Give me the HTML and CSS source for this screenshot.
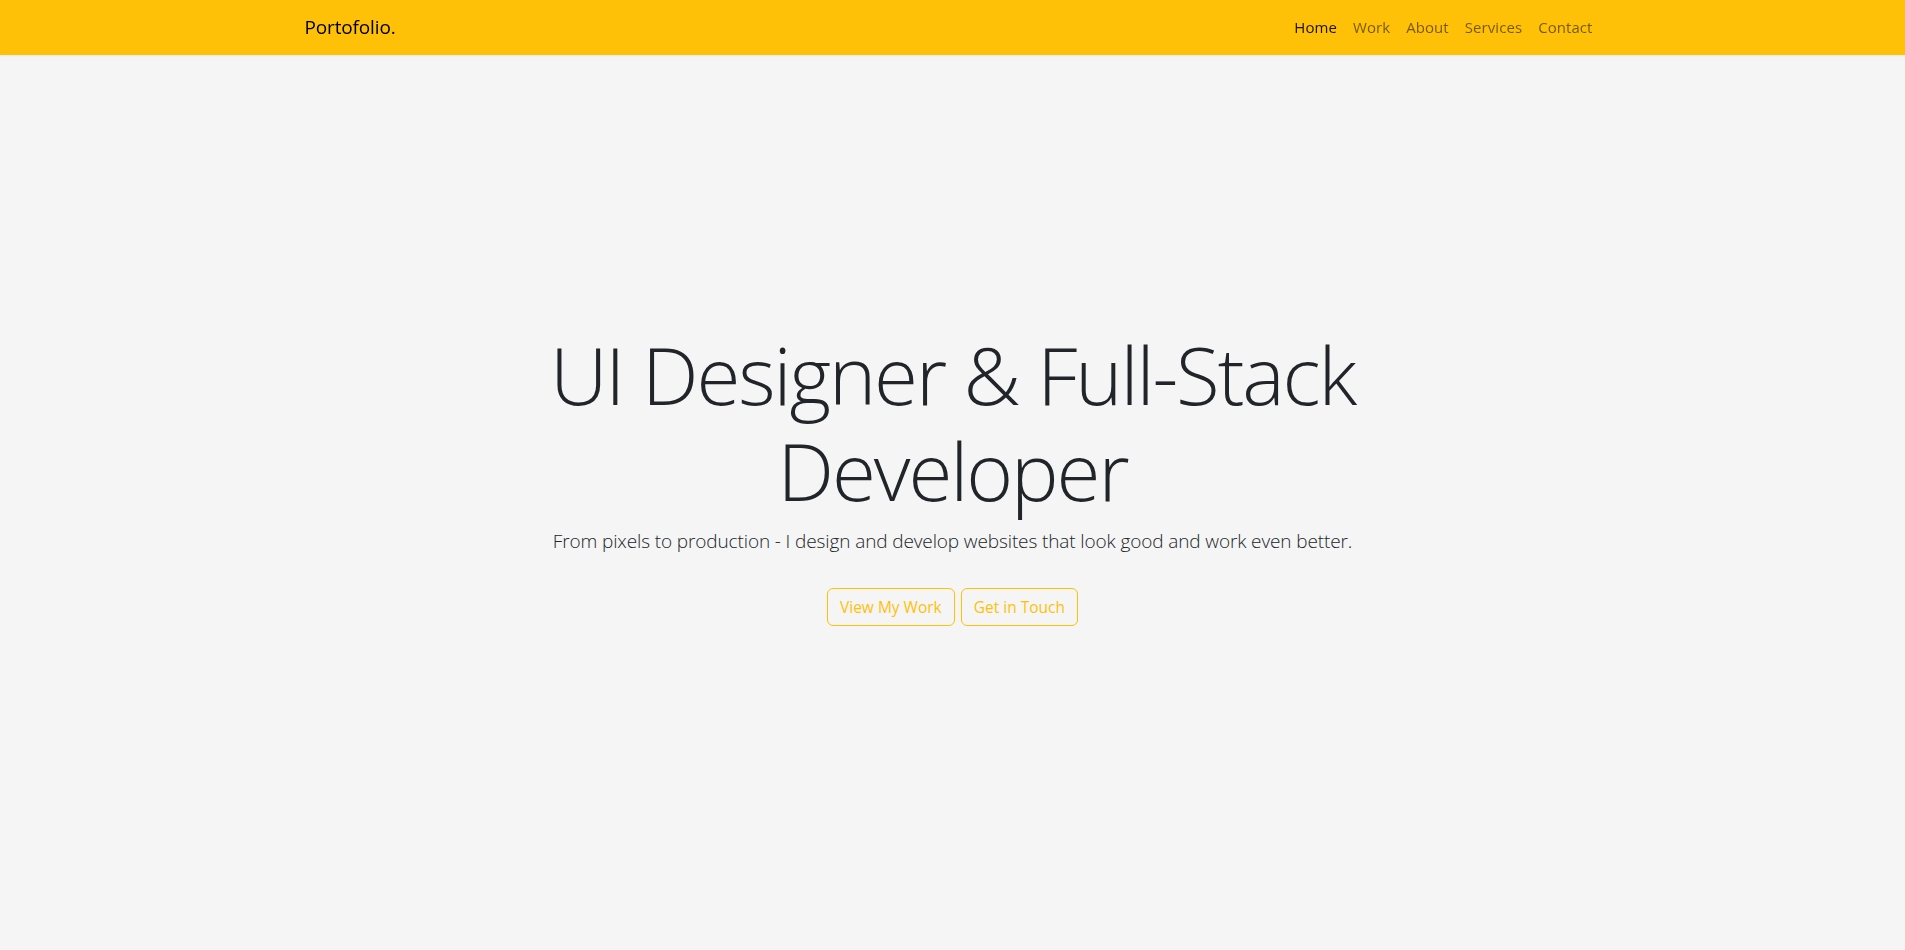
FILE: index.html
```html
<!DOCTYPE html>
<html lang="en">
<head>
<meta charset="utf-8">
<title>Portofolio.</title>
<link rel="stylesheet" href="styles.css">
</head>
<body>
<nav class="navbar">
  <div class="container nav-inner">
    <a class="brand" href="#">Portofolio.</a>
    <ul class="nav-links">
      <li><a class="nav-link active" href="#">Home</a></li>
      <li><a class="nav-link" href="#">Work</a></li>
      <li><a class="nav-link" href="#">About</a></li>
      <li><a class="nav-link" href="#">Services</a></li>
      <li><a class="nav-link" href="#">Contact</a></li>
    </ul>
  </div>
</nav>
<main class="hero">
  <div class="hero-content">
    <h1 class="hero-title">UI Designer &amp; Full-Stack<br>Developer</h1>
    <p class="lead">From pixels to production - I design and develop websites that look good and work even better.</p>
    <div class="actions">
      <a class="btn" href="#">View My Work</a>
      <a class="btn" href="#">Get in Touch</a>
    </div>
  </div>
</main>
</body>
</html>
```
FILE: styles.css
```css
* { box-sizing: border-box; }
html, body { margin: 0; padding: 0; }
body {
  background: #f5f5f5;
  color: #212529;
  font-family: "Open Sans", "Noto Sans", sans-serif;
  font-size: 16px;
  line-height: 1.5;
}
a { text-decoration: none; }

.navbar {
  position: fixed;
  top: 0; left: 0; right: 0;
  height: 55px;
  background: #ffc107;
  box-shadow: 0 1px 2px rgba(0,0,0,0.06);
  z-index: 10;
}
.container {
  max-width: 1320px;
  margin: 0 auto;
  padding: 0 12px;
}
.nav-inner {
  height: 100%;
  display: flex;
  align-items: center;
  justify-content: space-between;
}
.brand {
  color: #000;
  font-size: 19px;
  letter-spacing: -0.15px;
}
.nav-links {
  display: flex;
  list-style: none;
  margin: 0;
  padding: 0;
}
.nav-link {
  display: block;
  padding: 8px 8px;
  font-size: 15px;
  letter-spacing: 0.07px;
  color: rgba(0,0,0,0.55);
}
.nav-link.active { color: rgba(0,0,0,0.9); }

.hero {
  height: 100vh;
  display: flex;
  align-items: center;
  justify-content: center;
  text-align: center;
}
.hero-content { display: flex; flex-direction: column; align-items: center; padding-top: 2px; }
.hero-title {
  margin: 0 0 8px;
  font-size: 80px;
  font-weight: 300;
  line-height: 96px;
  letter-spacing: -2.1px;
}
.lead {
  margin: 0 0 32px;
  font-size: 19px;
  font-weight: 300;
  line-height: 30px;
  letter-spacing: -0.12px;
}
.actions { display: flex; gap: 6px; }
.btn {
  display: inline-block;
  padding: 6px 12px;
  font-size: 15.5px;
  line-height: 24px;
  color: #ffc107;
  border: 1px solid #ffc107;
  border-radius: 6px;
}
```
